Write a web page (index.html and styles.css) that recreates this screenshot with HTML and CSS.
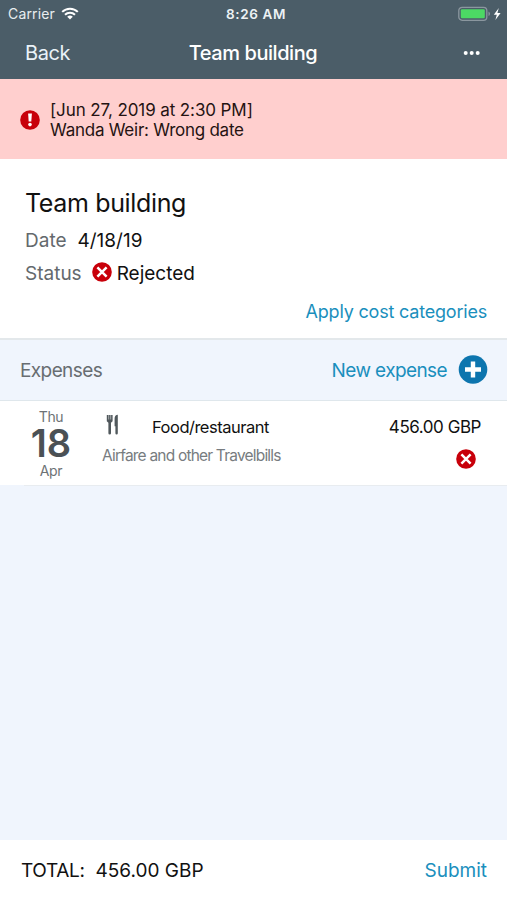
FILE: index.html
```html
<!DOCTYPE html>
<html lang="en">
<head>
  <meta charset="UTF-8">
  <meta name="viewport" content="width=device-width, initial-scale=1.0">
  <title>Team building</title>
  <link rel="stylesheet" href="styles.css">
</head>
<body>
  <!-- Header -->
  <header class="header">
    <div class="status-bar">
      <div class="carrier">
        <span>Carrier</span>
        <svg class="wifi" viewBox="0 0 18 13" width="18" height="13">
          <path d="M1.2 4.9a11 11 0 0 1 15.6 0M4 7.8a7.1 7.1 0 0 1 10 0" fill="none" stroke="#fff" stroke-width="2"/>
          <path d="M9 12.6L6.2 9.8a4 4 0 0 1 5.6 0z" fill="#fff"/>
        </svg>
      </div>
      <span class="time">8:26 AM</span>
      <div class="battery">
        <svg viewBox="0 0 44 16" width="44" height="16">
          <rect x=".8" y="1.3" width="28" height="13" rx="3.3" fill="none" stroke="#8b979f" stroke-width="1.3"/>
          <rect x="2.8" y="3.3" width="24" height="9" rx="1.3" fill="#4cd964"/>
          <path d="M30.5 5.5a2.5 2.5 0 0 1 0 4.6z" fill="#8b979f"/>
          <path d="M40.8 2L35.8 8.7h3L37.4 14l5.2-7h-3.2z" fill="#fff"/>
        </svg>
      </div>
    </div>
    <nav class="navbar">
      <a class="back">Back</a>
      <h1>Team building</h1>
      <div class="more">
        <svg viewBox="0 0 18 4" width="18" height="4" fill="#fff">
          <circle cx="2.7" cy="2" r="2"/>
          <circle cx="8.7" cy="2" r="2"/>
          <circle cx="14.7" cy="2" r="2"/>
        </svg>
      </div>
    </nav>
  </header>

  <!-- Rejection message -->
  <div class="alert">
    <svg viewBox="0 0 20 20" width="20" height="20">
      <circle cx="10" cy="10" r="9.8" fill="#c8000a"/>
      <path d="M8.1 3.6h3.8l-.6 8H8.7z" fill="#fff"/>
      <circle cx="10" cy="14.6" r="1.8" fill="#fff"/>
    </svg>
    <p>[Jun 27, 2019 at 2:30 PM]<br><span class="alert-reason">Wanda Weir: Wrong date</span></p>
  </div>

  <!-- Report summary -->
  <section class="summary">
    <h2>Team building</h2>
    <div class="field date-field"><span class="label">Date</span><span class="value">4/18/19</span></div>
    <div class="field status-field">
      <span class="label">Status</span>
      <svg class="rejected-icon" viewBox="0 0 20 20" width="20" height="20">
        <circle cx="10" cy="10" r="9.8" fill="#c8000a"/>
        <path d="M5.4 5.4l9.2 9.2M14.6 5.4l-9.2 9.2" stroke="#fff" stroke-width="2.5"/>
      </svg>
      <span class="value">Rejected</span>
    </div>
    <a class="apply">Apply cost categories</a>
  </section>

  <!-- Expenses -->
  <div class="expenses-header">
    <span class="expenses-title">Expenses</span>
    <a class="new-expense">New expense</a>
    <svg viewBox="0 0 30 30" width="30" height="30">
      <circle cx="15" cy="14.5" r="14.3" fill="#0d75ae"/>
      <path d="M15 6.5v16M7 14.5h16" stroke="#fff" stroke-width="4.4"/>
    </svg>
  </div>

  <div class="expense">
    <div class="day">
      <span class="weekday">Thu</span>
      <span class="day-number">18</span>
      <span class="month">Apr</span>
    </div>
    <div class="expense-info">
      <div class="category">
        <svg viewBox="0 0 14 21" width="14" height="21">
          <path d="M.8 1h5.8v6.2L5 8.8v10.4a1.3 1.3 0 0 1-2.6 0V8.8L.8 7.2z" fill="#50585c"/>
          <path d="M2.7 1v4.5M4.7 1v4.5" stroke="#fff" stroke-width=".5"/>
          <path d="M11.8.8v18.4a1.2 1.2 0 0 1-2.4 0v-7H8.6V4.5C8.6 2.3 9.8.8 11.8.8z" fill="#50585c"/>
        </svg>
        <span>Food/restaurant</span>
      </div>
      <p class="description">Airfare and other Travelbills</p>
    </div>
    <div class="expense-amount">
      <span>456.00 GBP</span>
      <svg viewBox="0 0 20 20" width="20" height="20">
        <circle cx="10" cy="10" r="9.8" fill="#c8000a"/>
        <path d="M5.4 5.4l9.2 9.2M14.6 5.4l-9.2 9.2" stroke="#fff" stroke-width="2.5"/>
      </svg>
    </div>
  </div>

  <!-- Footer -->
  <footer class="footer">
    <div class="total"><span class="total-label">TOTAL:</span><span class="total-amount">456.00 GBP</span></div>
    <a class="submit">Submit</a>
  </footer>
</body>
</html>
```

FILE: styles.css
```css
/* General styling */
* {
  box-sizing: border-box;
}

body {
  font-family: Inter, "Liberation Sans", sans-serif;
  background-color: #f0f5fd;
  color: #111;
  margin: 0;
  height: 900px;
  display: flex;
  flex-direction: column;
}

h1, h2, p {
  margin: 0;
  font-weight: 400;
}

svg {
  display: block;
  flex-shrink: 0;
}

/* Header */
.header {
  background-color: #4b5d68;
  color: #fff;
  height: 79px;
}

.status-bar {
  display: grid;
  grid-template-columns: 1fr auto 1fr;
  align-items: center;
  height: 27px;
  padding: 0 5px 0 8px;
  font-size: 14px;
}

.carrier {
  display: flex;
  align-items: center;
  gap: 6px;
  letter-spacing: 0.15px;
  color: #e8edf0;
}

.time {
  font-weight: 600;
  font-size: 13.5px;
  letter-spacing: 0.6px;
  margin-left: 2px;
  color: #edf2f5;
}

.battery {
  justify-self: end;
}

.navbar {
  display: grid;
  grid-template-columns: 1fr auto 1fr;
  align-items: center;
  height: 51px;
  padding: 0 26px 0 25px;
  font-size: 20px;
  letter-spacing: -0.45px;
}

.back {
  color: #e9f2f8;
}

.navbar h1 {
  font-size: 20px;
  font-weight: 500;
}

.more {
  justify-self: end;
}

/* Rejection message */
.alert {
  background-color: #ffcfce;
  height: 80px;
  display: flex;
  align-items: center;
  gap: 10px;
  padding: 1px 0 0 20px;
  font-size: 17px;
  line-height: 20px;
  letter-spacing: -0.1px;
  color: #251312;
}

.alert-reason {
  letter-spacing: -0.25px;
}

/* Report summary */
.summary {
  background-color: #fff;
  height: 181px;
  padding: 28px 20px 0 25px;
  border-bottom: 2px solid #e3e8eb;
  display: flex;
  flex-direction: column;
}

.summary h2 {
  font-size: 25px;
  line-height: 32px;
  letter-spacing: -0.35px;
}

.field {
  display: flex;
  align-items: center;
  height: 33px;
  font-size: 19px;
}

.date-field {
  margin-top: 5px;
}

.date-field .label {
  margin-right: 11px;
}

.label {
  color: #64696d;
}

.rejected-icon {
  margin: -4px 5px 0 10px;
}

.apply {
  align-self: flex-end;
  margin-top: 9px;
  font-size: 18px;
  line-height: 25px;
  letter-spacing: -0.2px;
  color: #1a8fbd;
}

/* Expenses */
.expenses-header {
  height: 61px;
  display: flex;
  align-items: center;
  padding: 0 19px 0 20px;
  border-bottom: 1px solid #dfe7ec;
  font-size: 19px;
  letter-spacing: -0.6px;
}

.expenses-title {
  color: #686d71;
  flex: 1;
}

.new-expense {
  color: #1a8fbd;
  margin-right: 11px;
}

.expense {
  background-color: #fff;
  height: 84px;
  display: flex;
  padding-right: 26px;
  box-shadow: 24px 1px 0 #e8ecf0;
}

.day {
  width: 102px;
  display: flex;
  flex-direction: column;
  align-items: center;
  padding-top: 7px;
  font-size: 14px;
  line-height: 17px;
  letter-spacing: -0.3px;
  color: #6d7275;
}

.day-number {
  font-size: 38px;
  font-weight: 600;
  line-height: 37px;
  letter-spacing: 0;
  color: #4b5155;
}

.expense-info {
  flex: 1;
}

.category {
  display: flex;
  align-items: center;
  padding: 12px 0 0 4px;
  height: 40px;
  gap: 32px;
  font-size: 16.5px;
  letter-spacing: -0.5px;
}

.category svg {
  margin-top: -5px;
}

.description {
  font-size: 15.5px;
  line-height: 29px;
  letter-spacing: -0.8px;
  color: #777c80;
}

.expense-amount {
  display: flex;
  flex-direction: column;
  align-items: flex-end;
  padding-top: 15px;
  font-size: 17px;
  line-height: 22px;
  letter-spacing: -0.45px;
}

.expense-amount svg {
  margin: 11px 5px 0 0;
}

/* Footer */
.footer {
  background-color: #fff;
  height: 60px;
  margin-top: auto;
  display: flex;
  align-items: center;
  justify-content: space-between;
  padding: 0 20px 0 21px;
  font-size: 19px;
}

.total-label {
  letter-spacing: -0.35px;
}

.total-amount {
  margin-left: 11px;
}

.submit {
  color: #1a8fbd;
}
```
